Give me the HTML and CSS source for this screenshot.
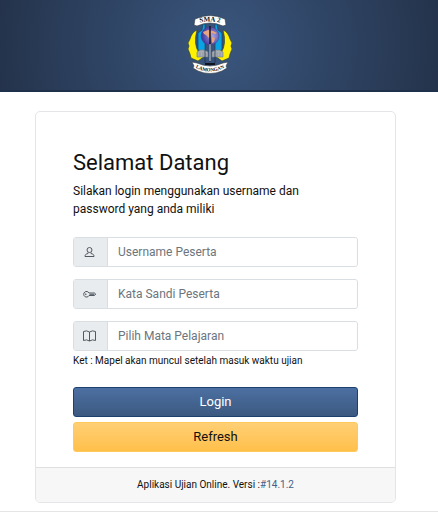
FILE: index.html
```html
<!DOCTYPE html>
<html lang="id">
<head>
    <meta charset="UTF-8">
    <meta name="viewport" content="width=device-width, initial-scale=1.0">
    <title>Aplikasi Ujian Online</title>
    <link rel="stylesheet" href="styles.css">
</head>
<body>
    <header class="header">
        <svg class="logo" viewBox="0 0 44 60" role="img" aria-label="SMA 2 Lamongan">
            <defs>
                <path id="arc-top" d="M6 10Q22 5 38 10"/>
                <path id="arc-bottom" d="M7 53.500Q22 61.500 37 53.500"/>
                <radialGradient id="globe" cx="65%" cy="50%" r="60%">
                    <stop offset="0" stop-color="#a9a4e0"/>
                    <stop offset="1" stop-color="#41389f"/>
                </radialGradient>
            </defs>
            <path d="M15 10l-1 6-4 3v17l7 2V10zM29 10l1 6 4 3v17l-7 2V10z" fill="#08a4e3" stroke="#17365c" stroke-width=".6"/>
            <path d="M9 16Q4 18 2 25L0 29l1 3-1 3 2 5 1 4 7 3 7-5-6-3Q5 30 9 16z" fill="#fff100" stroke="#263b3a" stroke-width=".6"/>
            <path d="M35 16Q40 18 42 25l2 4-1 3 1 3-2 5-1 4-7 3-7-5 6-3Q39 30 35 16z" fill="#fff100" stroke="#263b3a" stroke-width=".6"/>
            <path d="M9 38l3-2q5-1 8 2v5H9zM35 38l-3-2q-5-1-8 2v5h11z" fill="#a9afb5" stroke="#697580" stroke-width=".6"/>
            <path d="M12 38v4M15 38v4M18 39v3M26 39v3M29 38v4M32 38v4" stroke="#7c858d" stroke-width=".5"/>
            <circle cx="22" cy="22" r="9" fill="url(#globe)" stroke="#4d3b86" stroke-width=".5"/>
            <path d="M15 18l5-2 5 1 4 2-2 1-3-1-1 3-2 2-3-3-2-1z" fill="#e8a582"/>
            <path d="M24 23l3 1-1 4-2 1z" fill="#e8a582"/>
            <path d="M22 12v19" stroke="#101321" stroke-width="1.500"/>
            <path d="M22 30v18M17 36v13M27 36v13" stroke="#1c2d4b" stroke-width=".7"/>
            <path d="M22 30v17" stroke="#d0d5db" stroke-width="1"/>
            <path d="M17 50h10" stroke="#101321" stroke-width="2"/>
            <path d="M7 5Q22-2 37 5l1 6-3 1Q22 6 9 12l-3-1z" fill="#fff" stroke="#333a42" stroke-width=".6"/>
            <path d="M4 48l5 1Q22 55 35 49l5-1-2 4 1 2-5 3Q22 62 10 57l-5-3 1-2z" fill="#fff" stroke="#333a42" stroke-width=".6"/>
            <text class="logo-top"><textPath href="#arc-top" startOffset="50%">SMA 2</textPath></text>
            <text class="logo-bottom"><textPath href="#arc-bottom" startOffset="50%">LAMONGAN</textPath></text>
        </svg>
    </header>
    <main class="container">
        <div class="card">
            <form class="card-body">
                <h1>Selamat Datang</h1>
                <p class="lead">Silakan login menggunakan username dan password yang anda miliki</p>
                <div class="input-group">
                    <label class="input-icon" for="username" aria-label="Username Peserta">
                        <svg viewBox="0 0 14 14">
                            <circle cx="6.500" cy="5" r="2.500"/>
                            <path d="M5 7.500v1C3 9 2 9.500 2 11.500h9C11 9.500 10 9 8 8.500v-1"/>
                        </svg>
                    </label>
                    <input type="text" id="username" class="form-control" placeholder="Username Peserta">
                </div>
                <div class="input-group">
                    <label class="input-icon" for="password" aria-label="Kata Sandi Peserta">
                        <svg viewBox="0 0 14 14">
                            <path d="M6 6A2.800 2.800 0 1 0 6 8.500H11.500L12.800 7.200 11.500 6zM6.500 7.300h5"/>
                            <circle cx="2.800" cy="7.200" r=".4"/>
                        </svg>
                    </label>
                    <input type="password" id="password" class="form-control" placeholder="Kata Sandi Peserta">
                </div>
                <div class="input-group">
                    <label class="input-icon" for="mapel" aria-label="Pilih Mata Pelajaran">
                        <svg viewBox="0 0 14 14">
                            <path d="M6.500 3Q3.500 1 .5 2.500v9Q3.500 10 6.500 12 9.500 10 12.500 11.500v-9Q9.500 1 6.500 3v9"/>
                        </svg>
                    </label>
                    <select id="mapel" class="form-control">
                        <option value="">Pilih Mata Pelajaran</option>
                    </select>
                </div>
                <p class="help">Ket : Mapel akan muncul setelah masuk waktu ujian</p>
                <button type="submit" class="btn btn-primary">Login</button>
                <button type="reset" class="btn btn-warning">Refresh</button>
            </form>
            <div class="card-footer">Aplikasi Ujian Online. Versi :<a href="#">#14.1.2</a></div>
        </div>
    </main>
    <hr>
</body>
</html>
```
FILE: styles.css
```css
* {
    box-sizing: border-box;
}
body {
    margin: 0;
    background-color: #fff;
    color: #111;
    font-family: Roboto, sans-serif;
    font-size: 12px;
    line-height: 18px;
}
.header {
    display: flex;
    justify-content: center;
    padding: 14px 18px 16px 0;
    background: radial-gradient(circle, #3a567e, #24334b);
    border-bottom: 2px solid #1f304b;
}
.logo {
    width: 44px;
    height: 60px;
}
.logo text {
    font-family: "Liberation Serif", serif;
    font-weight: bold;
    text-anchor: middle;
    fill: #111;
}
.logo .logo-top {
    font-size: 7px;
}
.logo .logo-bottom {
    font-size: 5px;
}
.container {
    padding: 19px 42px 8px 35px;
}
.card {
    border: 1px solid #e3e5e8;
    border-radius: 5px;
    overflow: hidden;
}
.card-body {
    display: flex;
    flex-direction: column;
    padding: 36px 37px 15px;
}
h1 {
    margin: 0 0 4px;
    font-size: 22px;
    font-weight: 400;
    line-height: 30px;
}
.lead {
    max-width: 260px;
    margin: 0 0 19px;
}
.input-group {
    display: flex;
    height: 30px;
    margin-bottom: 12px;
    border: 1px solid #d9dee3;
    border-radius: 3px;
}
.input-icon {
    display: flex;
    align-items: center;
    justify-content: center;
    width: 34px;
    padding-right: 2px;
    background-color: #e9ecef;
    border-right: 1px solid #d9dee3;
}
.input-icon svg {
    width: 14px;
    height: 14px;
    fill: none;
    stroke: #505962;
    stroke-width: 1;
}
.form-control {
    flex: 1;
    min-width: 0;
    padding: 0 10px;
    border: 0;
    border-radius: 3px;
    background-color: #fff;
    color: #6c757d;
    font: inherit;
    appearance: none;
}
.form-control::placeholder {
    color: #6c757d;
}
.help {
    margin: -11px 0 17px;
    font-size: 10px;
}
.btn {
    height: 30px;
    padding: 0;
    border: 1px solid;
    border-radius: 3px;
    font: inherit;
    font-size: 13px;
}
.btn-primary {
    margin-bottom: 5px;
    border-color: #1c416f;
    background: linear-gradient(#4c70a2, #3c5980);
    color: #fff;
}
.btn-warning {
    border-color: #ffc95b;
    background: linear-gradient(#ffcf75, #ffc04a);
    color: #111;
}
.card-footer {
    padding: 8px;
    border-top: 1px solid #dfdfdf;
    background-color: #f7f7f7;
    font-size: 10px;
    text-align: center;
}
.card-footer a {
    color: #465f86;
    text-decoration: none;
}
hr {
    margin: 0;
    border: 0;
    border-top: 1px solid #e5e5e5;
}
```
